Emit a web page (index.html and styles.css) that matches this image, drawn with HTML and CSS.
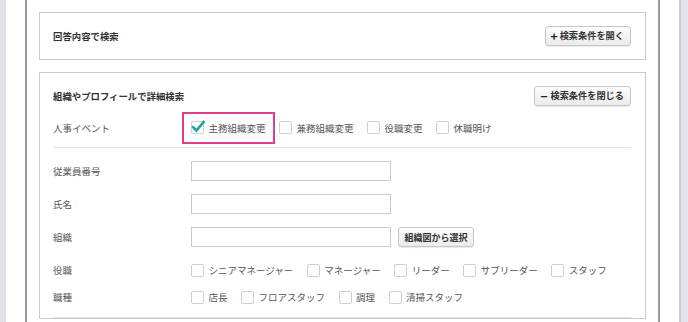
FILE: index.html
```html
<!DOCTYPE html>
<html lang="ja">
<head>
<meta charset="utf-8">
<link rel="stylesheet" href="styles.css">
</head>
<body>
<div class="page">
  <div class="strip-left"></div>
  <div class="main">
    <div class="frame">
      <section class="panel panel-closed">
        <div class="panel-head">
          <h2 class="panel-title">回答内容で検索</h2>
          <button class="btn"><span class="btn-sign">+</span>検索条件を開く</button>
        </div>
      </section>
      <section class="panel panel-open">
        <div class="panel-head">
          <h2 class="panel-title">組織やプロフィールで詳細検索</h2>
          <button class="btn"><span class="btn-sign minus">−</span>検索条件を閉じる</button>
        </div>
        <div class="row event-row">
          <div class="label">人事イベント</div>
          <div class="checks">
            <label class="check highlight">
              <svg class="box checked" width="15" height="15" viewBox="0 0 15 15">
                <rect x="1.5" y="2.5" width="12" height="12" rx="1.5" fill="#fff" stroke="#cfcfcf"/>
                <polyline points="3.2,8.2 6.4,11.6 13.6,3.2" fill="none" stroke="#22a3a3" stroke-width="2.6" stroke-linecap="square"/>
              </svg>
              <span>主務組織変更</span>
            </label>
            <label class="check"><span class="box"></span><span>兼務組織変更</span></label>
            <label class="check"><span class="box"></span><span>役職変更</span></label>
            <label class="check"><span class="box"></span><span>休職明け</span></label>
          </div>
        </div>
        <hr class="sep">
        <div class="row field first">
          <div class="label">従業員番号</div>
          <input class="input" type="text">
        </div>
        <div class="row field">
          <div class="label">氏名</div>
          <input class="input" type="text">
        </div>
        <div class="row field">
          <div class="label">組織</div>
          <input class="input" type="text">
          <button class="btn btn-small">組織図から選択</button>
        </div>
        <div class="row field role-row">
          <div class="label">役職</div>
          <div class="checks">
            <label class="check"><span class="box"></span><span>シニアマネージャー</span></label>
            <label class="check"><span class="box"></span><span>マネージャー</span></label>
            <label class="check"><span class="box"></span><span>リーダー</span></label>
            <label class="check"><span class="box"></span><span>サブリーダー</span></label>
            <label class="check"><span class="box"></span><span>スタッフ</span></label>
          </div>
        </div>
        <div class="row field job-row">
          <div class="label">職種</div>
          <div class="checks">
            <label class="check"><span class="box"></span><span>店長</span></label>
            <label class="check"><span class="box"></span><span>フロアスタッフ</span></label>
            <label class="check"><span class="box"></span><span>調理</span></label>
            <label class="check"><span class="box"></span><span>清掃スタッフ</span></label>
          </div>
        </div>
        <hr class="sep bottom">
      </section>
    </div>
  </div>
  <div class="strip-right"></div>
</div>
</body>
</html>
```

FILE: styles.css
```css
* { box-sizing: border-box; }
html, body { margin: 0; padding: 0; }
body {
  width: 688px;
  height: 322px;
  overflow: hidden;
  background: #fff;
  font-family: "Noto Sans CJK JP", "Noto Sans", sans-serif;
  font-size: 9.5px;
  color: #555;
}
.page {
  display: flex;
  height: 322px;
}
.strip-left {
  width: 6px;
  background: #e2e2e6;
  flex: none;
}
.strip-right {
  width: 9px;
  background: #e4e4e8;
  border-left: 2px solid #cdcdd1;
  flex: none;
}
.main {
  flex: 1;
  padding: 0 19px;
  background: #fff;
}
.frame {
  height: 100%;
  border-left: 2px solid #999;
  border-right: 2px solid #999;
  padding: 12px 12px 0 12px;
}
.panel {
  border: 1px solid #cbcbcb;
  background: #fff;
  padding: 13px 14px 0 13px;
}
.panel-closed {
  padding-bottom: 13px;
}
.panel-open {
  margin-top: 12px;
}
.panel-head {
  display: flex;
  justify-content: space-between;
  align-items: center;
  height: 20px;
}
.panel-title {
  margin: 0;
  font-size: 9.4px;
  font-weight: bold;
  color: #333;
}
.btn {
  font-family: inherit;
  height: 20px;
  padding: 0 6px 0 5px;
  border: 1px solid #c6c6c6;
  border-radius: 3px;
  background: linear-gradient(#fdfdfd, #ebebeb);
  box-shadow: 0 1px 1px rgba(0,0,0,0.08);
  font-size: 9.2px;
  font-weight: bold;
  color: #333;
  display: inline-flex;
  align-items: center;
  line-height: 1;
}
.btn-sign {
  font-size: 12px;
  font-weight: bold;
  margin-right: 2px;
  color: #222;
}
.btn-sign.minus {
  margin-right: 3px;
}
.row {
  display: flex;
  align-items: center;
}
.label {
  width: 138px;
  flex: none;
  color: #555;
}
.event-row {
  margin-top: 7px;
  height: 29px;
}
.checks {
  display: flex;
  align-items: center;
  gap: 13.5px;
}
.check {
  display: flex;
  align-items: center;
  gap: 4.5px;
  color: #555;
  white-space: nowrap;
  position: relative;
}
.check .box {
  width: 13px;
  height: 13px;
  border: 1px solid #cfcfcf;
  border-radius: 2px;
  background: #fff;
  flex: none;
}
.check svg.box {
  width: 15px;
  height: 15px;
  border: none;
  margin-right: -1px;
  margin-left: -1px;
  margin-top: -3px;
}
.highlight::after {
  content: "";
  position: absolute;
  left: -9px;
  right: -9px;
  top: -9px;
  bottom: -9px;
  border: 2.5px solid #e23c8c;
}
.sep {
  border: none;
  border-top: 1px solid #e2e2e2;
  margin: 5px 0 0 0;
  height: 0;
}
.field {
  height: 20px;
  margin-top: 13px;
}
.field.first {
  margin-top: 13px;
}
.input {
  width: 200px;
  height: 20px;
  border: 1px solid #c9c9c9;
  border-radius: 0;
  background: #fff;
  margin: 0;
  flex: none;
}
.btn-small {
  margin-left: 7px;
  height: 20px;
  width: 76px;
  justify-content: center;
  padding: 0;
  font-size: 9px;
}
.job-row {
  margin-top: 7px;
}
.sep.bottom {
  margin-top: 10px;
}
```
